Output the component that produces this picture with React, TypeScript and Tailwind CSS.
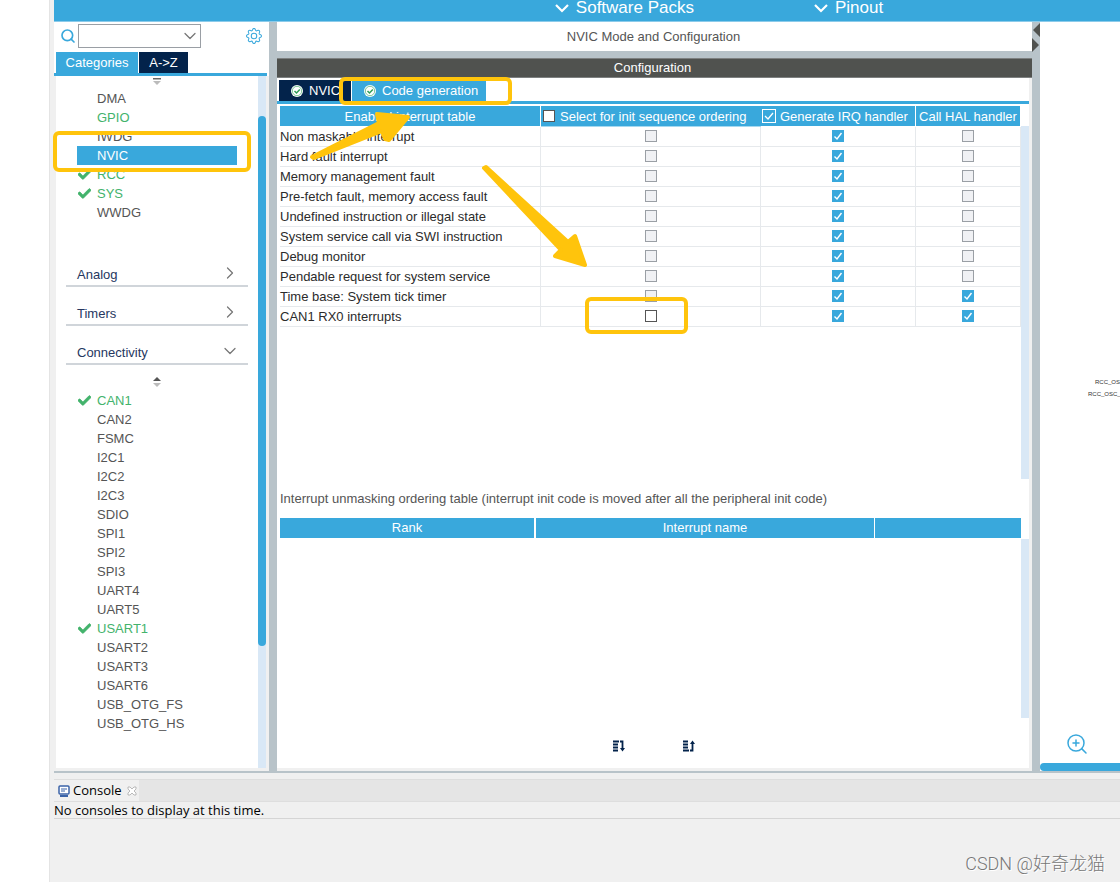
import type { ReactNode } from 'react';
import { ChevronDown, ChevronRight, Search, ZoomIn } from 'lucide-react';
import { BsGear } from 'react-icons/bs';
import { FaCheck } from 'react-icons/fa';

interface PeripheralItem {
  name: string;
  enabled?: boolean;
  ticked?: boolean;
  selected?: boolean;
}

interface InterruptRow {
  name: string;
  init: 'off' | 'editable';
  hal: boolean;
}

const systemCore: PeripheralItem[] = [
  { name: 'DMA' },
  { name: 'GPIO', enabled: true },
  { name: 'IWDG' },
  { name: 'NVIC', selected: true },
  { name: 'RCC', enabled: true, ticked: true },
  { name: 'SYS', enabled: true, ticked: true },
  { name: 'WWDG' },
];

const connectivity: PeripheralItem[] = [
  { name: 'CAN1', enabled: true, ticked: true },
  { name: 'CAN2' },
  { name: 'FSMC' },
  { name: 'I2C1' },
  { name: 'I2C2' },
  { name: 'I2C3' },
  { name: 'SDIO' },
  { name: 'SPI1' },
  { name: 'SPI2' },
  { name: 'SPI3' },
  { name: 'UART4' },
  { name: 'UART5' },
  { name: 'USART1', enabled: true, ticked: true },
  { name: 'USART2' },
  { name: 'USART3' },
  { name: 'USART6' },
  { name: 'USB_OTG_FS' },
  { name: 'USB_OTG_HS' },
];

const interrupts: InterruptRow[] = [
  { name: 'Non maskable interrupt', init: 'off', hal: false },
  { name: 'Hard fault interrupt', init: 'off', hal: false },
  { name: 'Memory management fault', init: 'off', hal: false },
  { name: 'Pre-fetch fault, memory access fault', init: 'off', hal: false },
  { name: 'Undefined instruction or illegal state', init: 'off', hal: false },
  { name: 'System service call via SWI instruction', init: 'off', hal: false },
  { name: 'Debug monitor', init: 'off', hal: false },
  { name: 'Pendable request for system service', init: 'off', hal: false },
  { name: 'Time base: System tick timer', init: 'off', hal: true },
  { name: 'CAN1 RX0 interrupts', init: 'editable', hal: true },
];

function PeripheralList({ items }: { items: PeripheralItem[] }) {
  return (
    <ul>
      {items.map((item) => {
        const rowClass = item.selected
          ? 'bg-[#39a8dc] text-white'
          : item.enabled
          ? 'text-[#43b36c]'
          : 'text-[#555]';

        return (
          <li key={item.name} className="pl-[21px] pr-[21px]">
            <button type="button" className={`flex h-[19px] w-full items-center text-left ${rowClass}`}>
              <span className="flex w-5 shrink-0 pl-px">
                {item.ticked && <FaCheck className="h-[13px] w-[13px]" stroke="currentColor" strokeWidth="30" />}
              </span>
              {item.name}
            </button>
          </li>
        );
      })}
    </ul>
  );
}

function CategoryRow({ name, open }: { name: string; open?: boolean }) {
  return (
    <button
      type="button"
      className="mx-[10px] flex h-[39px] items-end justify-between border-b-2 border-[#d0d5da] pr-2 pb-[2px] pl-[11px] text-[#26375f]"
    >
      <span className="leading-4">{name}</span>
      {open ? (
        <ChevronDown className="h-5 w-5 text-[#777]" strokeWidth={1.5} />
      ) : (
        <ChevronRight className="h-5 w-5 text-[#777]" strokeWidth={1.5} />
      )}
    </button>
  );
}

function SortArrows({ atTop }: { atTop?: boolean }) {
  return (
    <svg viewBox="0 0 10 11" className="h-[11px] w-[10px]">
      {atTop ? (
        <path d="M1 2h8v1.5H1z" fill="#666" />
      ) : (
        <path d="M1 5 5 1l4 4z" fill="#555" />
      )}
      {atTop ? (
        <path d="M1 5h8L5 9z" fill="#bbb" />
      ) : (
        <path d="M1 7h8l-4 4z" fill="#bbb" />
      )}
    </svg>
  );
}

interface TickProps {
  label: string;
  checked?: boolean;
  disabled?: boolean;
}

function Tick({ label, checked, disabled }: TickProps) {
  const boxClass = checked
    ? 'bg-[#39a8dc] border-[#39a8dc]'
    : disabled
    ? 'bg-[#f0f1f4] border-[#9a9fa5]'
    : 'bg-white border-[#555]';

  return (
    <span className="flex h-[19px] justify-center pt-[3px]">
      <span className="grid h-3 w-3">
        <input
          type="checkbox"
          aria-label={label}
          defaultChecked={checked}
          disabled={disabled}
          className={`col-start-1 row-start-1 h-3 w-3 appearance-none border ${boxClass}`}
        />
        {checked && (
          <svg viewBox="0 0 12 12" className="pointer-events-none col-start-1 row-start-1 h-3 w-3">
            <path d="M2.5 6.5 5 9l4.500-6" fill="none" stroke="#fff" strokeWidth="1.4" />
          </svg>
        )}
      </span>
    </span>
  );
}

function StatusIcon() {
  return (
    <svg viewBox="0 0 12 12" className="h-3 w-3">
      <circle cx="6" cy="6" r="6" fill="#fff" />
      <circle cx="6" cy="6" r="4.700" fill="none" stroke="#7cc796" strokeWidth="1" />
      <path d="m3.500 6 2 2 3.300-3.500" fill="none" stroke="#2f9e57" strokeWidth="1.500" />
    </svg>
  );
}

function TopMenu({ children }: { children: ReactNode }) {
  return (
    <button type="button" className="flex h-[15px] items-center gap-[7px] text-[17px] leading-[15px] text-white">
      <svg viewBox="0 0 14 10" className="h-[10px] w-[14px]" fill="none" stroke="currentColor" strokeWidth="2.2">
        <path d="m1 2 6 6 6-6" />
      </svg>
      {children}
    </button>
  );
}

function Sidebar() {
  return (
    <aside className="flex w-[215px] shrink-0 flex-col bg-[#f0f0f0]">
      <div className="flex h-[30px] items-center bg-white pr-[7px] pb-[3px] pl-[6px]">
        <Search className="h-4 w-4 text-[#39a8dc]" strokeWidth={2.5} />
        <span className="ml-[2px] grid items-center">
          <select
            aria-label="Search peripherals"
            className="col-start-1 row-start-1 h-6 w-[123px] appearance-none border border-[#9a9fa5] bg-white"
          />
          <ChevronDown
            className="pointer-events-none col-start-1 row-start-1 mr-px h-5 w-5 justify-self-end text-[#777]"
            strokeWidth={1.5}
          />
        </span>
        <button type="button" aria-label="Settings" className="ml-auto text-[#39a8dc]">
          <BsGear className="h-4 w-4" />
        </button>
      </div>
      <div className="bg-white">
        <div className="mr-[2px] flex border-b-[3px] border-[#39a8dc] pl-[2px] text-white">
          <button type="button" className="h-[21px] w-[82px] bg-[#39a8dc]">Categories</button>
          <button type="button" className="ml-px h-[21px] w-[49px] bg-[#03234b]">A-&gt;Z</button>
        </div>
      </div>
      <div className="mr-[3px] mb-[3px] ml-[2px] flex flex-1 bg-white">
        <div className="flex flex-1 flex-col">
          <div className="flex h-[13px] justify-center">
            <SortArrows atTop />
          </div>
          <PeripheralList items={systemCore} />
          <div className="h-[26px]" />
          <CategoryRow name="Analog" />
          <CategoryRow name="Timers" />
          <CategoryRow name="Connectivity" open />
          <div className="flex h-[26px] items-center justify-center pt-[6px]">
            <SortArrows />
          </div>
          <PeripheralList items={connectivity} />
        </div>
        <div className="w-2 bg-[#d9e8f6] pt-10">
          <div className="h-[530px] rounded-full bg-[#39a8dc]" />
        </div>
      </div>
    </aside>
  );
}

function InterruptTable() {
  return (
    <table className="w-full table-fixed border-separate border-spacing-0 leading-[19px]">
      <colgroup>
        <col />
        <col className="w-[220px]" />
        <col className="w-[155px]" />
        <col className="w-[105px]" />
      </colgroup>
      <thead className="text-white">
        <tr className="h-[21px]">
          <th className="border-r border-b border-white bg-[#39a8dc] p-0 font-normal">Enabled interrupt table</th>
          <th className="border-b border-[#a5d8f0] bg-[#39a8dc] p-0 font-normal">
            <label className="flex items-center gap-[5px] pl-[2px] whitespace-nowrap">
              <input type="checkbox" className="h-3 w-3 appearance-none border border-[#555] bg-white" />
              Select for init sequence ordering
            </label>
          </th>
          <th className="border-r border-b border-white bg-[#39a8dc] p-0 font-normal">
            <label className="flex items-center gap-1 pl-px whitespace-nowrap">
              <span className="grid">
                <input
                  type="checkbox"
                  defaultChecked
                  className="col-start-1 row-start-1 h-[14px] w-[14px] appearance-none border border-white"
                />
                <svg viewBox="0 0 14 14" className="pointer-events-none col-start-1 row-start-1 h-[14px] w-[14px]">
                  <path d="m3 7 3 3 5-6" fill="none" stroke="#fff" strokeWidth="1.3" />
                </svg>
              </span>
              Generate IRQ handler
            </label>
          </th>
          <th className="border-r border-b border-white bg-[#39a8dc] p-0 font-normal whitespace-nowrap">
            Call HAL handler
          </th>
        </tr>
      </thead>
      <tbody className="text-[#2b2b2b]">
        {interrupts.map((row) => (
          <tr key={row.name} className="h-5">
            <td className="border-r border-b border-[#e6e9ec] p-0 whitespace-nowrap">{row.name}</td>
            <td className="border-r border-b border-[#e6e9ec] p-0">
              <Tick label={`${row.name}: init sequence ordering`} disabled={row.init === 'off'} />
            </td>
            <td className="border-r border-b border-[#e6e9ec] p-0">
              <Tick label={`${row.name}: generate IRQ handler`} checked />
            </td>
            <td className="border-r border-b border-[#e6e9ec] p-0">
              <Tick label={`${row.name}: call HAL handler`} checked={row.hal} disabled={!row.hal} />
            </td>
          </tr>
        ))}
      </tbody>
    </table>
  );
}

function ConfigurationPanel() {
  return (
    <main className="flex min-w-0 flex-1 flex-col">
      <h1 className="flex h-[29px] items-center justify-center bg-white pr-[2px] text-[#555]">
        NVIC Mode and Configuration
      </h1>
      <h2 className="mt-[7px] flex h-5 items-center justify-center border-y border-[#7d8080] bg-[#50524f] pr-1 text-white">
        Configuration
      </h2>
      <div className="flex-1 bg-[#f0f0f0] pr-[3px] pb-[3px]">
        <div className="flex h-full flex-col bg-white pt-[2px]">
          <div className="flex border-b-[3px] border-[#39a8dc] pl-[2px] text-white">
            <button type="button" className="flex h-[21px] w-[72px] items-center gap-[6px] bg-[#03234b] pl-3">
              <StatusIcon />
              NVIC
            </button>
            <button type="button" className="ml-px flex h-[21px] w-[134px] items-center gap-[6px] bg-[#39a8dc] pl-3">
              <StatusIcon />
              Code generation
            </button>
          </div>
          <div className="mt-[2px] flex h-[373px] pl-[3px]">
            <div className="flex-1">
              <InterruptTable />
            </div>
            <div className="mt-5 w-2 bg-[#d9e8f6]" />
          </div>
          <p className="mt-3 pl-[3px] leading-4 text-[#555]">
            Interrupt unmasking ordering table (interrupt init code is moved after all the peripheral init code)
          </p>
          <div className="mt-[11px] flex h-[200px] pl-[3px]">
            <table className="h-5 w-full flex-1 table-fixed border-separate border-spacing-0 text-white">
              <colgroup>
                <col className="w-[256px]" />
                <col />
                <col className="w-[146px]" />
              </colgroup>
              <thead>
                <tr className="h-5">
                  <th className="border-r-2 border-white bg-[#39a8dc] p-0 font-normal">Rank</th>
                  <th className="border-r border-white bg-[#39a8dc] p-0 font-normal">Interrupt name</th>
                  <th className="bg-[#39a8dc] p-0" />
                </tr>
              </thead>
            </table>
            <div className="mt-[21px] w-2 bg-[#d9e8f6]" />
          </div>
          <div className="mt-[21px] flex justify-center gap-14 pl-[2px] text-[#03234b]">
            <button type="button" aria-label="Move down">
              <svg viewBox="0 0 14 14" className="h-[14px] w-[14px]" fill="none" stroke="currentColor" strokeWidth="1.8">
                <path d="M1 2.500h6M1 5.500h5M1 8.500h5M1 11.500h5M8 2.500h2.500v8" />
                <path d="M8 9h5l-2.500 3.500z" fill="currentColor" stroke="none" />
              </svg>
            </button>
            <button type="button" aria-label="Move up">
              <svg viewBox="0 0 14 14" className="h-[14px] w-[14px]" fill="none" stroke="currentColor" strokeWidth="1.8">
                <path d="M1 2.500h5M1 5.500h5M1 8.500h5M1 11.500h6M8 11.500h2.500v-8" />
                <path d="M8 5h5l-2.500-3.500z" fill="currentColor" stroke="none" />
              </svg>
            </button>
          </div>
        </div>
      </div>
    </main>
  );
}

function PinoutPanel() {
  return (
    <section className="flex w-20 shrink-0 flex-col overflow-hidden bg-white">
      <div className="flex-1 pt-[354px] text-[6px] leading-3 whitespace-nowrap text-[#333]">
        <p className="pl-[55px]">RCC_OSC_IN</p>
        <p className="pl-12">RCC_OSC_OUT</p>
      </div>
      <button type="button" aria-label="Zoom in" className="mb-[7px] ml-[25px] w-6 text-[#39a8dc]">
        <ZoomIn className="h-6 w-6" strokeWidth={1.5} />
      </button>
      <div className="h-2 rounded-l-full bg-[#39a8dc]" />
    </section>
  );
}

function ConsolePanel() {
  return (
    <footer className="h-[109px] pt-[6px] font-['Open_Sans','Noto_Sans',sans-serif] text-[13px] text-black">
      <div className="flex h-[23px] border-y border-[#dedede] bg-[#e5e5e5]">
        <div className="flex w-[85px] items-center gap-[3px] bg-[#f0f0f0] pl-1">
          <svg viewBox="0 0 12 12" className="h-3 w-3 shrink-0">
            <rect x="1" y="1" width="10" height="8" rx="1" fill="#fff" stroke="#3b63a8" strokeWidth="1.500" />
            <path d="M3 4h6M3 6h4" stroke="#3b63a8" />
            <path d="M2 11h8" stroke="#3b63a8" strokeWidth="2" />
          </svg>
          Console
          <button type="button" aria-label="Close console" className="ml-[2px]">
            <svg viewBox="0 0 10 10" className="h-[10px] w-[10px]" fill="#fff" stroke="#aaa" strokeWidth="0.800">
              <path d="M1 1h2l2 2 2-2h2v2L7 5l2 2v2H7L5 7 3 9H1V7l2-2-2-2z" />
            </svg>
          </button>
        </div>
      </div>
      <p className="h-[17px] border-b border-[#d5d5d5] leading-4">No consoles to display at this time.</p>
    </footer>
  );
}

/* Highlight boxes and arrows drawn over the window */
function Annotations() {
  return (
    <div className="pointer-events-none absolute inset-0">
      <div className="absolute top-[131px] left-[53px] h-[41px] w-[198px] rounded-md border-4 border-[#ffc40c]" />
      <div className="absolute top-[77px] left-[339px] h-7 w-[173px] rounded-md border-4 border-[#ffc40c]" />
      <div className="absolute top-[297px] left-[585px] h-[37px] w-[103px] rounded-md border-4 border-[#ffc40c]" />
      <svg
        viewBox="0 0 300 170"
        className="absolute top-[105px] left-[300px] h-[170px] w-[300px]"
        fill="#ffc40c"
        stroke="#ffc40c"
        strokeWidth="4"
        strokeLinejoin="round"
      >
        <path d="M12 52 79 18 77 9l31 3-19 23-4-1-3-8-68 27z" />
        <path d="M184 63 186 62 268 137 275 131 285 160 255 151 261 145z" />
      </svg>
      <p className="absolute right-[15px] bottom-1 font-['Liberation_Sans_Narrow','Roboto','Noto_Sans_CJK_SC',sans-serif] text-[18px] leading-7 font-light text-[#777] [text-shadow:1px_1px_0_#fff]">
        CSDN @好奇龙猫
      </p>
    </div>
  );
}

export default function App() {
  return (
    <div className="relative flex min-h-screen bg-white pl-[49px] font-['Liberation_Sans',Arial,sans-serif] text-[13px]">
      <div className="flex min-w-0 flex-1 flex-col border-l border-[#e4e4e4] bg-[#f0f0f0] pl-1">
        <header className="flex h-[22px] items-start justify-center gap-[120px] border-b border-[#8ccbea] bg-[#39a8dc] pr-[16px] pl-[280px]">
          <TopMenu>Software Packs</TopMenu>
          <TopMenu>Pinout</TopMenu>
        </header>
        <div className="flex flex-1 border-b-2 border-[#b8c3c9] bg-[#b8c3c9]">
          <Sidebar />
          <div className="w-2 shrink-0" />
          <ConfigurationPanel />
          <div className="w-2 shrink-0">
            <svg viewBox="0 0 8 31" className="h-[31px] w-2" fill="#50524f">
              <path d="M8 1v14L1 8zM0 16v14l7-7z" />
            </svg>
          </div>
          <PinoutPanel />
        </div>
        <ConsolePanel />
      </div>
      <Annotations />
    </div>
  );
}
